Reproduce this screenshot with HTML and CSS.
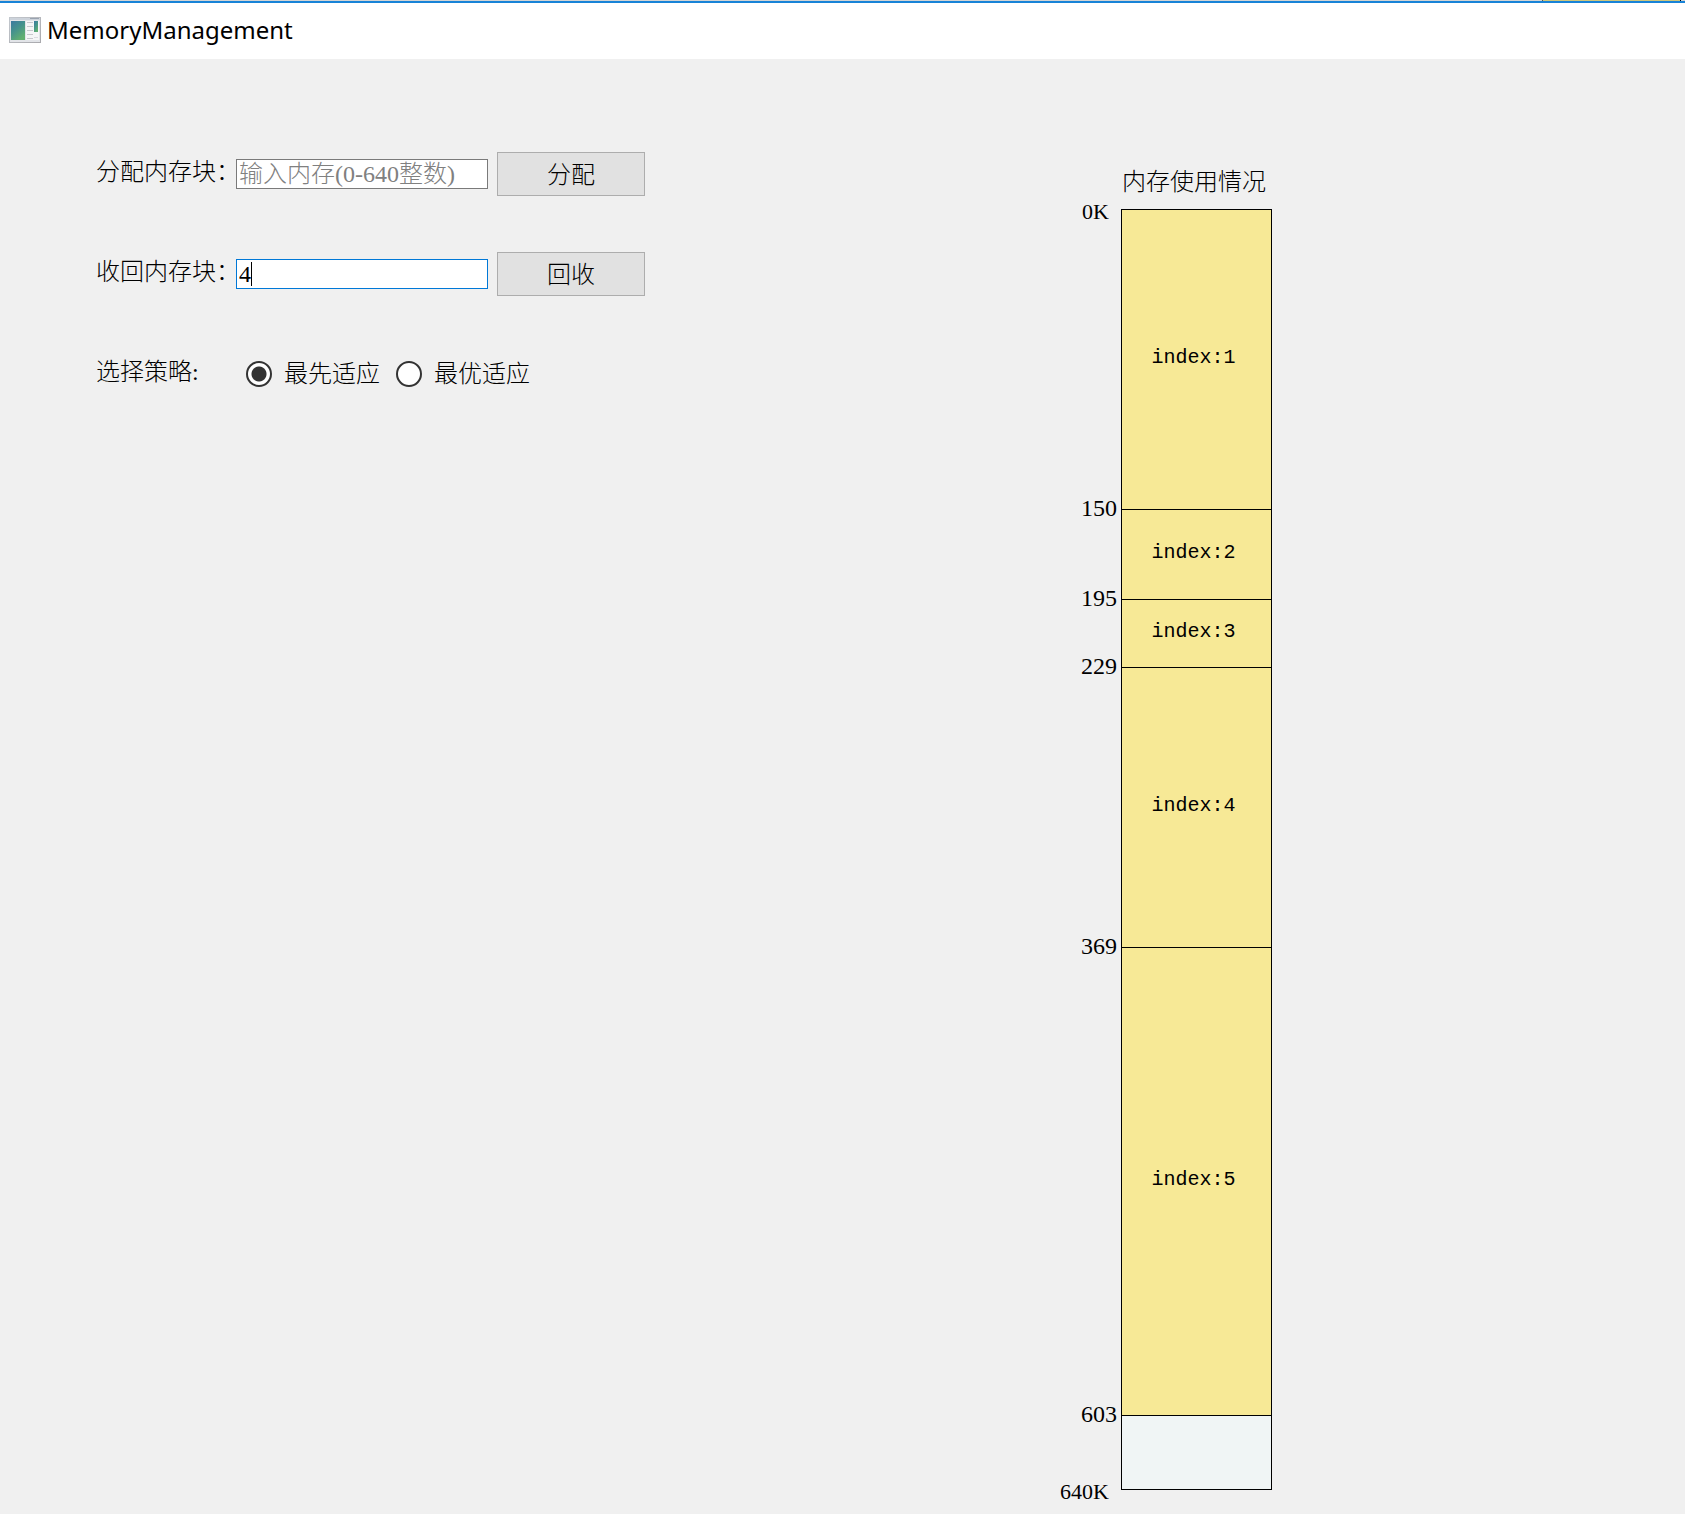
FILE: index.html
```html
<!DOCTYPE html>
<html lang="zh-CN">
<head>
<meta charset="utf-8">
<title>MemoryManagement</title>
<link rel="stylesheet" href="styles.css">
</head>
<body>
<div class="backdrop"><span class="backdrop-strip"></span></div>
<header class="titlebar">
  <svg class="app-icon" width="32" height="26" viewBox="0 0 32 26" aria-hidden="true">
    <defs>
      <linearGradient id="pane" x1="0" y1="0" x2="0.6" y2="1">
        <stop offset="0" stop-color="#3a78a0"/>
        <stop offset="0.5" stop-color="#45938c"/>
        <stop offset="1" stop-color="#62b070"/>
      </linearGradient>
      <linearGradient id="frame" x1="0" y1="0" x2="1" y2="1">
        <stop offset="0" stop-color="#c3c8ce"/>
        <stop offset="1" stop-color="#a9a9ad"/>
      </linearGradient>
    </defs>
    <rect width="32" height="26" fill="url(#frame)"/>
    <rect x="1" y="1" width="30" height="24" fill="#e2e4e8"/>
    <rect x="1" y="1" width="30" height="2" fill="#cdd3db"/>
    <rect x="21" y="1" width="9" height="1" fill="#9aa3b0"/>
    <rect x="2" y="4" width="14" height="19" fill="url(#pane)"/>
    <rect x="17" y="4" width="13" height="19" fill="#f6f6f7"/>
    <path d="M18 5.500h6M18 9.500h6M18 13.500h6M18 17.500h6M18 21.500h6" stroke="#c8c8cd"/>
    <rect x="25" y="4" width="4" height="11" fill="url(#pane)"/>
    <path d="M25 20.500h4" stroke="#dcdce0"/>
  </svg>
  <h1 class="title">MemoryManagement</h1>
</header>
<main class="content">
  <form class="controls">
    <div class="row">
      <label class="caption" for="alloc">分配内存块：</label>
      <input class="field" id="alloc" type="text" placeholder="输入内存(0-640整数)">
      <button class="action" type="button">分配</button>
    </div>
    <div class="row">
      <label class="caption" for="free">收回内存块：</label>
      <input class="field field-active" id="free" type="text" value="4">
      <button class="action" type="button">回收</button>
    </div>
    <div class="row" role="radiogroup" aria-labelledby="policy">
      <span class="caption" id="policy">选择策略:</span>
      <div class="options">
        <label class="option"><input class="radio" type="radio" name="policy" checked>最先适应</label>
        <label class="option"><input class="radio" type="radio" name="policy">最优适应</label>
      </div>
    </div>
  </form>
  <section class="memory">
    <h2 class="memory-title">内存使用情况</h2>
    <ol class="map">
      <li class="segment" style="--size:150"><span class="address limit">0K</span><span class="block">index:1</span></li>
      <li class="segment" style="--size:45"><span class="address">150</span><span class="block">index:2</span></li>
      <li class="segment" style="--size:34"><span class="address">195</span><span class="block">index:3</span></li>
      <li class="segment" style="--size:140"><span class="address">229</span><span class="block">index:4</span></li>
      <li class="segment" style="--size:234"><span class="address">369</span><span class="block">index:5</span></li>
      <li class="segment" style="--size:37"><span class="address">603</span><span class="block block-free"></span></li>
      <li class="segment" style="--size:0"><span class="address limit">640K</span><span class="block-end"></span></li>
    </ol>
  </section>
</main>
</body>
</html>
```
FILE: styles.css
```css
* {
  box-sizing: border-box;
}

body {
  margin: 0;
  min-height: 100vh;
  background: #f0f0f0;
  color: #000;
  font: 300 24px/24px "Liberation Serif", "Noto Sans CJK SC", serif;
}

.backdrop {
  display: flex;
  justify-content: flex-end;
  height: 3px;
  padding-right: 4px;
  background: #d4d4d4;
  border-bottom: 2px solid #1883d7;
}

.backdrop-strip {
  width: 139px;
  background: #cfc67c;
  border-left: 1px solid #555;
  border-right: 1px solid #000;
}

.titlebar {
  display: flex;
  align-items: center;
  gap: 6px;
  height: 56px;
  padding: 0 9px 2px;
  background: #fff;
}

.title {
  margin: 0;
  font: 400 24px/32px "Noto Sans", sans-serif;
}

.content {
  display: grid;
  grid-template-columns: 1fr 636px;
}

.controls {
  display: flex;
  flex-direction: column;
  gap: 56px;
  padding: 93px 0 0 96px;
}

.row {
  display: flex;
  align-items: center;
  height: 44px;
}

.caption {
  flex: none;
  width: 140px;
  padding-bottom: 4px;
  white-space: nowrap;
}

.field {
  width: 252px;
  height: 30px;
  margin-right: 9px;
  padding: 0 2px;
  border: 1px solid #7a7a7a;
  border-radius: 0;
  outline: none;
  background: #fff;
  color: #000;
  font: inherit;
}

.field::placeholder {
  color: #808080;
  opacity: 1;
}

/* The insertion point stays visible after the value. */
.field-active {
  border-color: #0078d7;
  background: linear-gradient(#000, #000) 14px 2px / 1px 24px no-repeat #fff;
  caret-color: transparent;
}

.action {
  width: 148px;
  height: 44px;
  padding: 2px 0 0;
  border: 1px solid #adadad;
  border-radius: 0;
  background: #e1e1e1;
  color: #000;
  font: inherit;
}

.options {
  display: flex;
  gap: 16px;
  padding-left: 10px;
}

.option {
  display: flex;
  align-items: center;
  gap: 12px;
}

.radio {
  appearance: none;
  width: 26px;
  height: 26px;
  margin: 0;
  border: 2px solid #333;
  border-radius: 50%;
  background: #fff;
}

.radio:checked {
  background: radial-gradient(circle, #333 7px, #fff 8px);
}

.memory {
  padding: 111px 0 12px;
}

.memory-title {
  margin: 0 0 15px 73px;
  font: inherit;
}

.map {
  margin: 0;
  padding: 0;
  list-style: none;
}

.segment {
  display: grid;
  grid-template-columns: 72px 151px;
  height: calc(var(--size) * 2px);
}

.address {
  height: 24px;
  margin-top: -13px;
  padding-right: 4px;
  text-align: right;
}

.address.limit {
  margin-top: -9px;
  padding-right: 12px;
  font-size: 22px;
}

.block {
  display: flex;
  align-items: center;
  justify-content: center;
  padding: 0 6px 4px 0;
  border: solid #000;
  border-width: 1px 1px 0;
  background: #f7e996;
  font: 20px/24px "Liberation Mono", monospace;
}

.block-free {
  background: #f0f5f5;
}

.block-end {
  height: 1px;
  background: #000;
}
```
